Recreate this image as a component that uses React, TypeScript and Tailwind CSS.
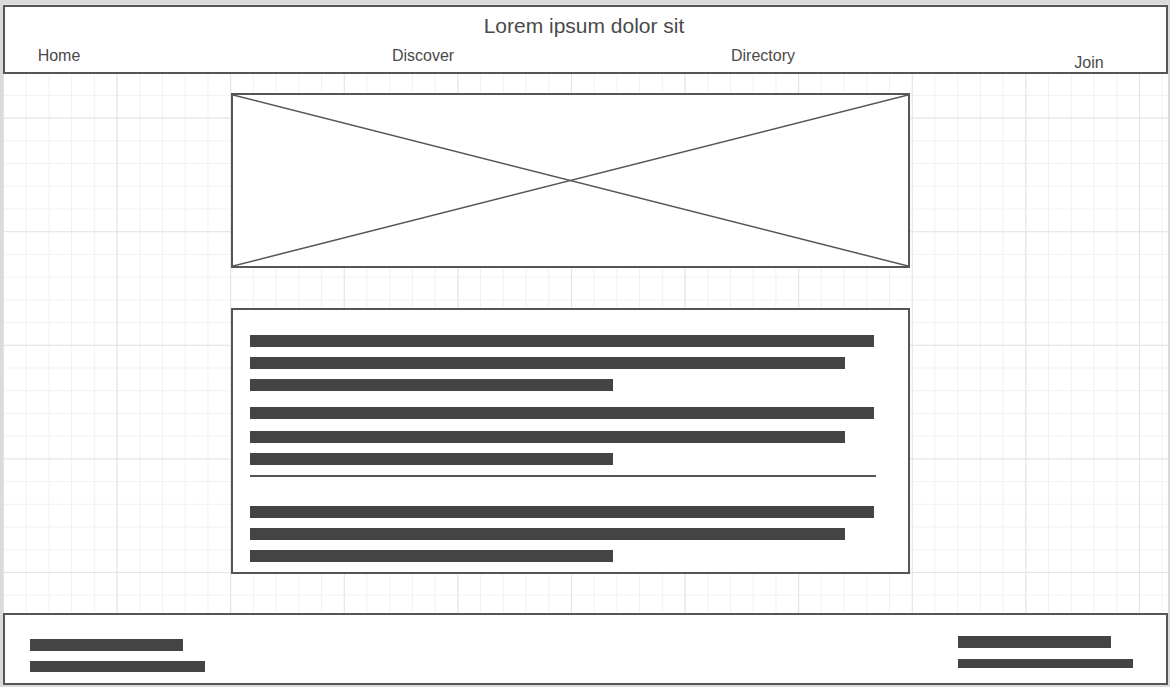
const font = { fontFamily: '"Liberation Sans", Arial, sans-serif' };

const Bar = ({ w, h = "h-[12px]", className = "" }: { w: string; h?: string; className?: string }) => (
  <div className={`${w} ${h} bg-[#444444] ${className}`} />
);

const Header = () => (
  <div className="mt-[1px] h-[69px] border-2 border-[#555555] bg-white flex flex-col text-[#4a4a4a]">
    <div className="pt-[7px] pr-[3px] text-center text-[21px] leading-[24px]">Lorem ipsum dolor sit</div>
    <div className="mt-[9px] flex flex-row items-start text-[16px] leading-[18px]">
      <div className="ml-[4px] w-[100px] text-center">Home</div>
      <div className="ml-[264px] w-[100px] text-center">Discover</div>
      <div className="ml-[240px] w-[100px] text-center">Directory</div>
      <div className="ml-[226px] mt-[7px] w-[100px] text-center">Join</div>
    </div>
  </div>
);

const ImagePlaceholder = () => (
  <div className="relative ml-[228px] mt-[19px] w-[679px] h-[175px] border-2 border-[#555555] bg-white">
    <svg className="absolute inset-0 w-full h-full" viewBox="0 0 100 100" preserveAspectRatio="none">
      <line x1="0" y1="0" x2="100" y2="100" stroke="#555555" strokeWidth="1.5" vectorEffect="non-scaling-stroke" />
      <line x1="100" y1="0" x2="0" y2="100" stroke="#555555" strokeWidth="1.5" vectorEffect="non-scaling-stroke" />
    </svg>
  </div>
);

const TextBlock = () => (
  <div className="ml-[228px] mt-[40px] w-[679px] h-[266px] border-2 border-[#555555] bg-white pl-[17px] pt-[25px] flex flex-col">
    <Bar w="w-[624px]" />
    <Bar w="w-[595px]" className="mt-[10px]" />
    <Bar w="w-[363px]" className="mt-[10px]" />
    <Bar w="w-[624px]" className="mt-[16px]" />
    <Bar w="w-[595px]" className="mt-[12px]" />
    <Bar w="w-[363px]" className="mt-[10px]" />
    <div className="mt-[10px] w-[626px] h-[1.5px] bg-[#555555]" />
    <Bar w="w-[624px]" className="mt-[29.5px]" />
    <Bar w="w-[595px]" className="mt-[10px]" />
    <Bar w="w-[363px]" className="mt-[10px]" />
  </div>
);

const Footer = () => (
  <div className="mt-[39px] h-[72px] border-2 border-[#555555] bg-white flex flex-row justify-between">
    <div className="pl-[25px] pt-[24px] flex flex-col">
      <Bar w="w-[153px]" />
      <Bar w="w-[175px]" h="h-[11px]" className="mt-[10px]" />
    </div>
    <div className="pr-[33px] pt-[21px] flex flex-col">
      <Bar w="w-[153px]" h="h-[11.5px]" />
      <Bar w="w-[175px]" h="h-[9px]" className="mt-[11.5px]" />
    </div>
  </div>
);

export default function App() {
  return (
    <div className="w-[1170px] h-[687px] bg-[#dadada] pt-[4px] pl-[3px] pr-[2px] pb-[2px]" style={font}>
      <div className="h-full flex flex-col bg-white bg-[linear-gradient(to_right,#e4e4e4_1px,transparent_1px),linear-gradient(to_bottom,#e4e4e4_1px,transparent_1px),linear-gradient(to_right,#f1f1f1_1px,transparent_1px),linear-gradient(to_bottom,#f1f1f1_1px,transparent_1px)] bg-[size:113.6px_113.6px,113.6px_113.6px,22.72px_22.72px,22.72px_22.72px]">
        <Header />
        <ImagePlaceholder />
        <TextBlock />
        <Footer />
      </div>
    </div>
  );
}
